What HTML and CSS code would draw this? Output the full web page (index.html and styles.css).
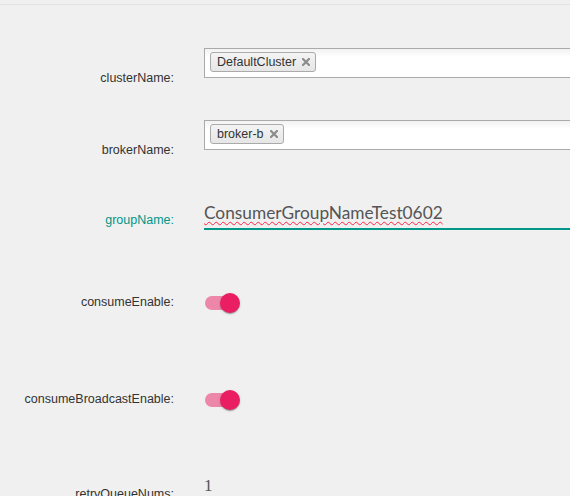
FILE: index.html
```html
<!DOCTYPE html>
<html>
<head>
<meta charset="utf-8">
<link rel="stylesheet" href="styles.css">
</head>
<body>
<div class="topbar"></div>
<form class="form">
  <div class="row row-tags">
    <label class="label">clusterName:</label>
    <div class="control">
      <div class="tagbox">
        <span class="tag">DefaultCluster<svg class="x" viewBox="0 0 8 8" width="8" height="8"><path d="M1 1L7 7M7 1L1 7" stroke="#8c8c8c" stroke-width="2.2" stroke-linecap="square"/></svg></span>
      </div>
    </div>
  </div>
  <div class="row row-tags">
    <label class="label">brokerName:</label>
    <div class="control">
      <div class="tagbox">
        <span class="tag">broker-b<svg class="x" viewBox="0 0 8 8" width="8" height="8"><path d="M1 1L7 7M7 1L1 7" stroke="#8c8c8c" stroke-width="2.2" stroke-linecap="square"/></svg></span>
      </div>
    </div>
  </div>
  <div class="row row-group">
    <label class="label label-active">groupName:</label>
    <div class="control">
      <div class="textfield"><span class="misspelled">ConsumerGroupNameTest0602</span></div>
    </div>
  </div>
  <div class="row row-toggle">
    <label class="label">consumeEnable:</label>
    <div class="control">
      <div class="switch"><span class="track"></span><span class="thumb"></span></div>
    </div>
  </div>
  <div class="row row-toggle">
    <label class="label">consumeBroadcastEnable:</label>
    <div class="control">
      <div class="switch"><span class="track"></span><span class="thumb"></span></div>
    </div>
  </div>
  <div class="row row-num">
    <label class="label">retryQueueNums:</label>
    <div class="control">
      <div class="number">1</div>
    </div>
  </div>
</form>
</body>
</html>
```
FILE: styles.css
```css
html, body {
  margin: 0;
  padding: 0;
  overflow: hidden;
  background: #f0f0f0;
}
body {
  font-family: "Liberation Sans", Arial, sans-serif;
  color: #333;
}
.topbar {
  height: 4px;
  border-bottom: 1px solid #e2e2e2;
}
.form {
  width: 760px;
  padding-top: 43px;
}
.row {
  display: flex;
  align-items: flex-start;
}
.label {
  flex: none;
  width: 174px;
  margin-right: 30px;
  text-align: right;
  font-size: 12.5px;
  line-height: 15px;
  color: #333;
}
.label-active {
  color: #009688;
}
.control {
  flex: 1;
}

/* tag inputs */
.row-tags {
  height: 72px;
}
.row-tags .label {
  padding-top: 23px;
}
.tagbox {
  box-sizing: border-box;
  height: 30px;
  border: 1px solid #aaa;
  background: linear-gradient(#f2f2f2 0, #ffffff 8px);
  padding: 3px 5px 0;
  display: flex;
  align-items: flex-start;
}
.tag {
  box-sizing: border-box;
  height: 20px;
  display: inline-flex;
  align-items: center;
  gap: 6px;
  padding: 0 5px 0 6px;
  border: 1px solid #aaa;
  border-radius: 3px;
  background: linear-gradient(#f4f4f4, #e6e6e6);
  font-size: 12.5px;
  color: #333;
}
.x {
  display: block;
}

/* group name text field */
.row-group {
  height: 88px;
}
.row-group .label {
  padding-top: 21px;
}
.textfield {
  padding: 9px 0 3px;
  line-height: 24px;
  font-family: Lato, "Open Sans", sans-serif;
  font-size: 17.3px;
  color: #555;
  border-bottom: 2px solid #009688;
}
.misspelled {
  text-decoration: underline wavy #f24;
  text-decoration-thickness: 1px;
  text-underline-offset: 2px;
}

/* toggles */
.row-toggle {
  height: 97px;
}
.row-toggle .label {
  padding-top: 15px;
}
.switch {
  position: relative;
  width: 35px;
  height: 20px;
  margin: 13px 0 0 1px;
}
.track {
  position: absolute;
  left: 0;
  top: 3px;
  width: 34px;
  height: 14px;
  border-radius: 7px;
  background: rgba(233, 30, 99, 0.5);
}
.thumb {
  position: absolute;
  left: 15px;
  top: 0;
  width: 20px;
  height: 20px;
  border-radius: 50%;
  background: #e91e63;
  box-shadow: 0 2px 1px -1px rgba(0,0,0,.2), 0 1px 1px 0 rgba(0,0,0,.14), 0 1px 3px 0 rgba(0,0,0,.12);
}

/* number */
.row-num .label {
  padding-top: 13px;
}
.number {
  padding-top: 2px;
  font-family: "Liberation Serif", "Times New Roman", serif;
  font-size: 17px;
  line-height: 20px;
  color: #555;
}
```
